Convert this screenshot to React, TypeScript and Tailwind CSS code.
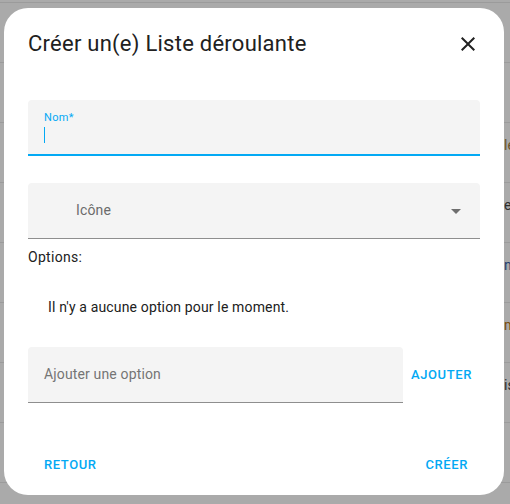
const rows = [
	{ text: "", color: "text-[#333]" },
	{ text: "", color: "text-[#333]" },
	{ text: "le", color: "text-[#6e5526]" },
	{ text: "e", color: "text-[#2e2e2e]" },
	{ text: "n", color: "text-[#1f3f70]" },
	{ text: "m", color: "text-[#7a4d0c]" },
	{ text: "is", color: "text-[#2e2e2e]" },
	{ text: "", color: "text-[#333]" },
	{ text: "", color: "text-[#333]" },
];

export default function App() {
	return (
		<div className="relative w-[510px] h-[504px] overflow-hidden bg-[#aaaaaa] font-['Roboto',sans-serif]">
			{/* Page behind the overlay */}
			<div className="h-[3px] border-b border-[#9b9b9b]" />
			{rows.map((row, i) => (
				<div
					key={i}
					className="h-[60px] border-b border-[#9b9b9b] pt-[12px] pl-[504px] text-[14px] leading-5 whitespace-nowrap"
				>
					<span className={row.color}>{row.text}</span>
				</div>
			))}

			{/* Dialog */}
			<div className="absolute left-[4px] top-[8px] w-[500px] h-[487px] rounded-[24px] bg-white flex flex-col">
				<div className="flex items-center justify-between pl-6 pr-6 pt-[22px]">
					<h2 className="text-[22px] leading-7 tracking-[0.25px] text-[#212121] font-normal">
						Créer un(e) Liste déroulante
					</h2>
					<button className="w-6 h-6 flex items-center justify-center">
						<svg viewBox="0 0 24 24" className="w-6 h-6 fill-[#212121]">
							<path d="M19 6.41L17.59 5 12 10.59 6.41 5 5 6.41 10.59 12 5 17.59 6.41 19 12 13.41 17.59 19 19 17.59 13.41 12z" />
						</svg>
					</button>
				</div>

				<div className="px-6 flex flex-col">
					{/* Nom field */}
					<div className="mt-[42px] h-[56px] bg-[#f4f4f4] rounded-t-[4px] border-b-2 border-[#03a9f4] pl-4 pt-[10px]">
						<div className="text-[11px] leading-4 tracking-[0.3px] text-[#03a9f4]">Nom*</div>
						<div className="mt-[1px] w-px h-4 bg-[#03a9f4]" />
					</div>

					{/* Icon picker */}
					<div className="mt-[27px] h-[56px] bg-[#f4f4f4] rounded-t-[4px] border-b border-[#8e8e8e] flex items-center justify-between pl-[48px] pr-3">
						<span className="text-[14px] tracking-[0.15px] text-[#6b6b6b]">Icône</span>
						<svg viewBox="0 0 24 24" className="w-6 h-6 fill-[#6e6e6e]">
							<path d="M7 10l5 5 5-5z" />
						</svg>
					</div>

					<div className="mt-[8px] text-[14px] leading-5 tracking-[0.3px] text-[#212121]">Options:</div>

					<div className="mt-[30px] pl-5 text-[14px] leading-5 tracking-[0.15px] text-[#212121]">
						Il n'y a aucune option pour le moment.
					</div>

					<div className="mt-[30px] flex items-center">
						<div className="w-[375px] shrink-0 h-[56px] bg-[#f4f4f4] rounded-t-[4px] border-b border-[#8e8e8e] flex items-center pl-4">
							<span className="text-[14px] tracking-[0.15px] text-[#757575]">Ajouter une option</span>
						</div>
						<button className="px-2 h-9 text-[13px] font-medium tracking-[0.6px] text-[#03a9f4]">
							AJOUTER
						</button>
					</div>
				</div>

				<div className="mt-auto flex items-center justify-between pl-[32px] pr-[28px] pb-[12px]">
					<button className="px-2 h-9 text-[13px] font-medium tracking-[0.6px] text-[#03a9f4]">
						RETOUR
					</button>
					<button className="px-2 h-9 text-[13px] font-medium tracking-[0.6px] text-[#03a9f4]">
						CRÉER
					</button>
				</div>
			</div>
		</div>
	);
}
